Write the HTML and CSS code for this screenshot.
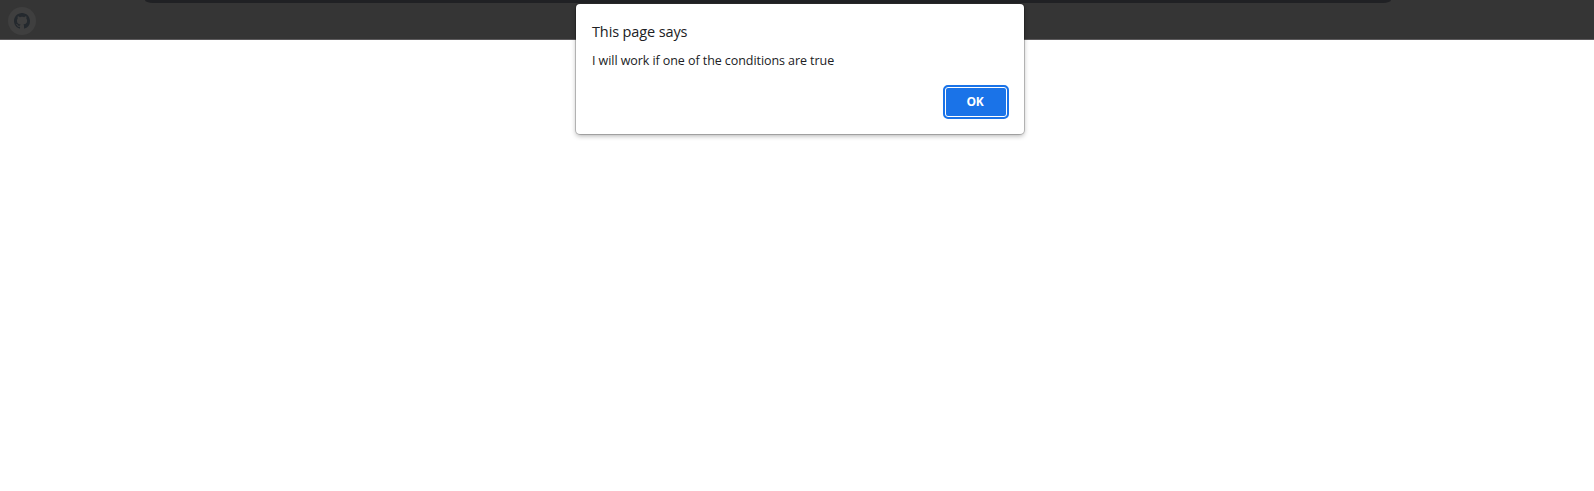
FILE: index.html
```html
<!DOCTYPE html>
<html lang="en">
<head>
<meta charset="utf-8">
<title>Page</title>
<link rel="stylesheet" href="styles.css">
</head>
<body>
<header class="toolbar">
  <div class="address"></div>
  <div class="bookmark">
    <svg width="16" height="16" viewBox="0 0 16 16"><path d="M8 0C3.58 0 0 3.58 0 8c0 3.54 2.29 6.53 5.47 7.59.4.07.55-.17.55-.38 0-.19-.01-.82-.01-1.49-2.01.37-2.53-.49-2.69-.94-.09-.23-.48-.94-.82-1.13-.28-.15-.68-.52-.01-.53.63-.01 1.08.58 1.23.82.72 1.21 1.87.87 2.33.66.07-.52.28-.87.51-1.07-1.78-.2-3.64-.89-3.64-3.95 0-.87.31-1.59.82-2.15-.08-.2-.36-1.02.08-2.12 0 0 .67-.21 2.2.82.64-.18 1.32-.27 2-.27s1.36.09 2 .27c1.53-1.04 2.2-.82 2.2-.82.44 1.1.16 1.92.08 2.12.51.56.82 1.27.82 2.15 0 3.07-1.87 3.75-3.65 3.95.29.25.54.73.54 1.48 0 1.07-.01 1.93-.01 2.2 0 .21.15.46.55.38A8.01 8.01 0 0 0 16 8c0-4.42-3.58-8-8-8z"/></svg>
  </div>
</header>
<div class="dialog">
  <div class="title"><span>This page says</span></div>
  <div class="message"><span>I will work if one of the conditions are true</span></div>
  <div class="actions"><button class="ok">OK</button></div>
</div>
</body>
</html>
```
FILE: styles.css
```css
body {
  margin: 0;
  height: 491px;
  overflow: hidden;
  background: #fff;
  font-family: "Open Sans", "Noto Sans", sans-serif;
}
.toolbar {
  box-sizing: border-box;
  height: 40px;
  background: #353535;
  border-bottom: 1px solid #5c5a5c;
}
.address {
  height: 3px;
  margin: 0 203px 0 145px;
  background: #202124;
  border-radius: 0 0 8px 8px / 0 0 3px 3px;
}
.bookmark {
  display: flex;
  align-items: center;
  justify-content: center;
  width: 28px;
  height: 28px;
  margin: 4px 0 0 8px;
  border-radius: 50%;
  background: #3f3f3f;
}
.bookmark svg {
  fill: #24292e;
}
/* The alert floats over the toolbar and the page. */
.dialog {
  position: absolute;
  top: 4px;
  left: 576px;
  box-sizing: border-box;
  width: 448px;
  height: 130px;
  padding: 16px 15px 15px 16px;
  background: #fff;
  border-radius: 4px;
  box-shadow: 0 0 0 1px rgba(0, 0, 0, .2), 0 2px 5px rgba(0, 0, 0, .3);
  color: #202124;
}
.title {
  height: 24px;
  font-size: 14.5px;
  line-height: 24px;
  letter-spacing: -.12px;
}
.message {
  height: 20px;
  margin-top: 7px;
  font-size: 12.5px;
  line-height: 20px;
  letter-spacing: -.07px;
}
.actions {
  display: flex;
  justify-content: flex-end;
  margin-top: 14px;
}
.ok {
  box-sizing: border-box;
  width: 66px;
  height: 34px;
  padding: 0 2px 0 0;
  border: 2px solid #1a73e8;
  border-radius: 5px;
  background: #1a73e8;
  box-shadow: inset 0 0 0 1px #fff;
  color: #fff;
  font: 700 12px/30px "Open Sans", "Noto Sans", sans-serif;
  letter-spacing: -.3px;
}
```
